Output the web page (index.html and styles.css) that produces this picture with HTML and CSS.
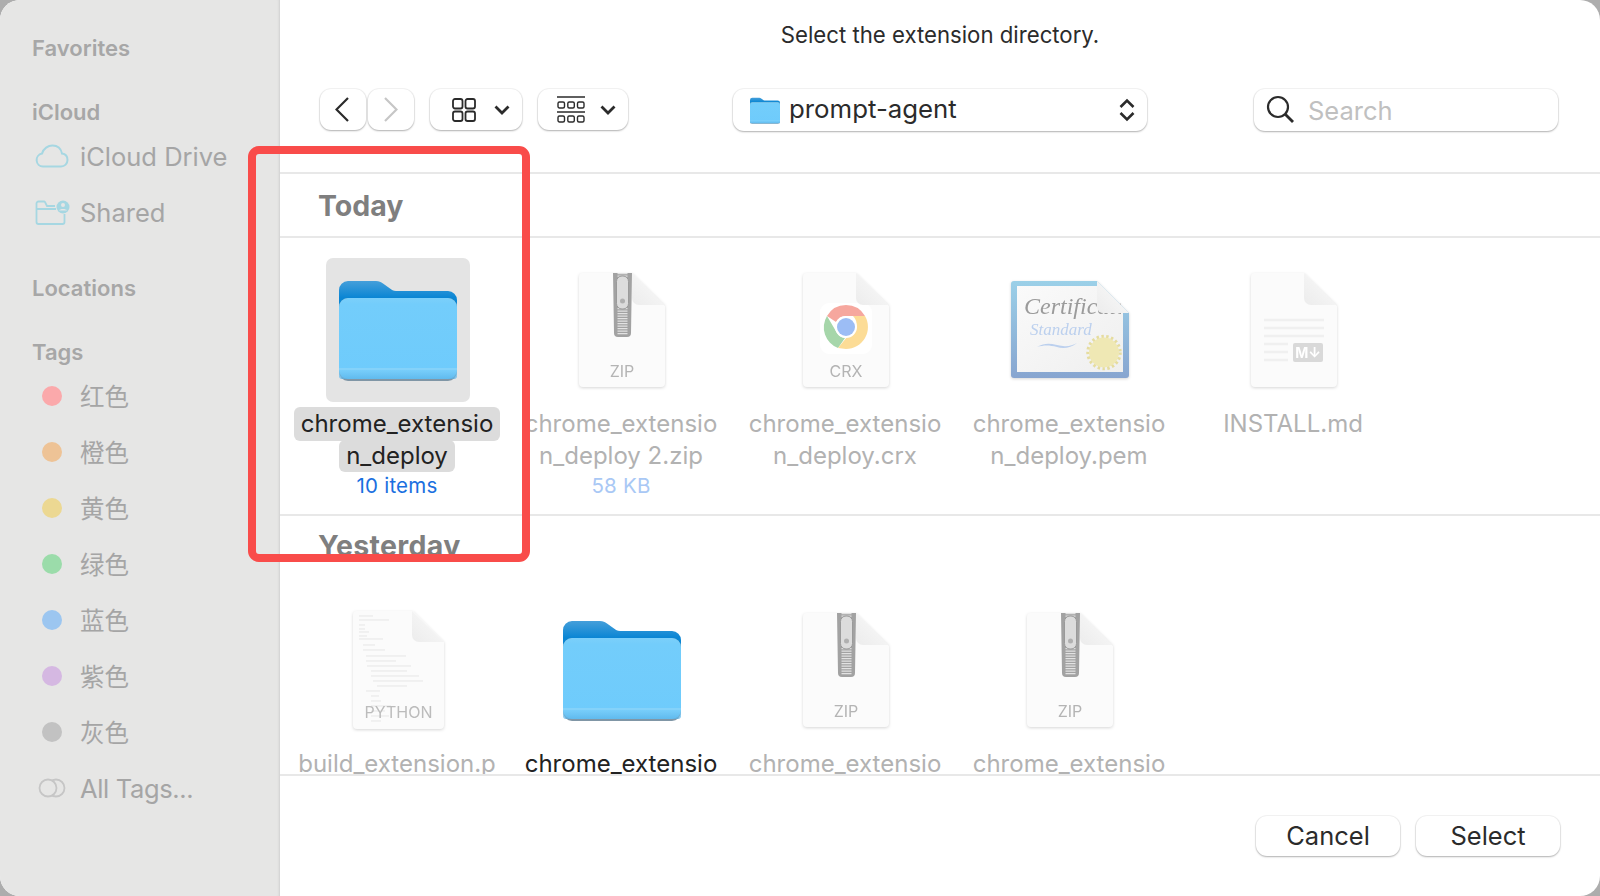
FILE: index.html
```html
<!DOCTYPE html>
<html lang="en">
<head>
<meta charset="utf-8">
<title>Select the extension directory</title>
<link rel="stylesheet" href="styles.css">
</head>
<body>
<svg class="defs" width="0" height="0" aria-hidden="true">
  <defs>
    <linearGradient id="fback" x1="0" y1="0" x2="0" y2="1"><stop offset="0" stop-color="#459fda"/><stop offset=".34" stop-color="#0a86d4"/></linearGradient>
    <linearGradient id="ffront" x1="0" y1="0" x2="0" y2="1"><stop offset="0" stop-color="#7bcffa"/><stop offset=".08" stop-color="#73cdfb"/><stop offset="1" stop-color="#6ecbfc"/></linearGradient>
    <linearGradient id="fbase" x1="0" y1="0" x2="0" y2="1"><stop offset="0" stop-color="#7ccffa"/><stop offset="1" stop-color="#5ab3e8"/></linearGradient>
    <linearGradient id="certb" x1="0" y1="0" x2="0" y2="1"><stop offset="0" stop-color="#9bd0e8"/><stop offset="1" stop-color="#87a5d0"/></linearGradient>
    <linearGradient id="certi" x1="0" y1="0" x2="1" y2="1"><stop offset="0" stop-color="#fafafa"/><stop offset="1" stop-color="#efefef"/></linearGradient>
    <linearGradient id="foldg" x1="0" y1="1" x2="1" y2="0"><stop offset="0" stop-color="#ececec"/><stop offset="1" stop-color="#fbfbfb"/></linearGradient>
    <clipPath id="certclip"><rect x="6" y="5" width="104" height="86"/></clipPath>
    <symbol id="folder" viewBox="0 0 118 104">
      <path d="M0 12a9 9 0 0 1 9-9h28c3 0 5 1 7 2.500l7 5c2 1.500 3 2.500 6 2.500h52a9 9 0 0 1 9 9v30H0z" fill="url(#fback)"/>
      <rect y="20" width="118" height="83" rx="9" fill="#8096a6"/>
      <rect y="20" width="118" height="81" rx="9" fill="url(#ffront)"/>
      <path d="M0 90h118v2H0z" fill="#84d2fa"/>
      <path d="M0 92h118v7a3 3 0 0 1-3 2H3a3 3 0 0 1-3-2z" fill="url(#fbase)" opacity=".7"/>
    </symbol>
    <symbol id="doc" viewBox="0 0 86 114">
      <path d="M4 0h49l33 33v77a4 4 0 0 1-4 4H4a4 4 0 0 1-4-4V4a4 4 0 0 1 4-4z" fill="#fbfbfb"/>
    </symbol>
    <symbol id="fold" viewBox="0 0 86 114">
      <path d="M53 0l33 32H60a7 7 0 0 1-7-7z" fill="url(#foldg)"/>
    </symbol>
    <symbol id="zipper" viewBox="0 0 86 114">
      <path d="M34 0h19l-1 60a4 4 0 0 1-4 4h-9a4 4 0 0 1-4-4z" fill="#a2a2a2"/>
      <path d="M43.500 0v62" stroke="#e2e2e2" stroke-width="10" stroke-dasharray="1.200 1.300" fill="none"/>
      <rect x="37.500" y="3" width="12" height="33" rx="5.500" fill="#dcdcdc" stroke="#9a9a9a"/>
      <circle cx="43.500" cy="28" r="2.500" fill="#b0b0b0"/>
    </symbol>
  </defs>
</svg>

<div class="window">
  <aside class="sidebar">
    <div class="heading">Favorites</div>
    <div class="heading gap">iCloud</div>
    <div class="row">
      <span class="ico"><svg width="34" height="24" viewBox="0 0 34 24"><path d="M8 22.500a6.500 6.500 0 0 1-1-12.900C8.500 4.500 13 1.500 17.500 1.500c5 0 8.500 3.300 9.500 8 3.500.5 5.500 3.200 5.500 6.500 0 3.700-2.800 6.500-6.500 6.500z" fill="none" stroke="#a6d7e2" stroke-width="2"/></svg></span>
      <span class="label">iCloud Drive</span>
    </div>
    <div class="row">
      <span class="ico"><svg width="35" height="25" viewBox="0 0 35 25"><path d="M20 6H12L10 2a1.500 1.500 0 0 0-1-.5H3.500a2 2 0 0 0-2 2V22a2 2 0 0 0 2 2h24a2 2 0 0 0 2-2V14M2 9h19" fill="none" stroke="#a6d7e2" stroke-width="1.800"/><circle cx="28" cy="7" r="6.500" fill="#a6d7e2"/><circle cx="28" cy="5" r="2" fill="#e6e6e5"/><path d="M24 10.500c1-2 7-2 8 0z" fill="#e6e6e5"/></svg></span>
      <span class="label">Shared</span>
    </div>
    <div class="heading gap">Locations</div>
    <div class="heading gap">Tags</div>
    <div class="row"><span class="ico"><i class="dot red"></i></span><span class="label cjk">红色</span></div>
    <div class="row"><span class="ico"><i class="dot orange"></i></span><span class="label cjk">橙色</span></div>
    <div class="row"><span class="ico"><i class="dot yellow"></i></span><span class="label cjk">黄色</span></div>
    <div class="row"><span class="ico"><i class="dot green"></i></span><span class="label cjk">绿色</span></div>
    <div class="row"><span class="ico"><i class="dot blue"></i></span><span class="label cjk">蓝色</span></div>
    <div class="row"><span class="ico"><i class="dot purple"></i></span><span class="label cjk">紫色</span></div>
    <div class="row"><span class="ico"><i class="dot gray"></i></span><span class="label cjk">灰色</span></div>
    <div class="row">
      <span class="ico"><svg width="28" height="20" viewBox="0 0 28 20"><circle cx="18" cy="10" r="8.500" fill="none" stroke="#c6c6c6" stroke-width="1.800"/><circle cx="10" cy="10" r="8.500" fill="#e6e6e5" stroke="#c6c6c6" stroke-width="1.800"/></svg></span>
      <span class="label tight">All Tags...</span>
    </div>
  </aside>

  <main class="main">
    <header class="top">
      <div class="title">Select the extension directory.</div>
      <div class="toolbar">
        <button class="btn nav"><svg class="back-ico" width="14" height="25" viewBox="0 0 14 25"><path d="M13 1L1.500 12.500 13 24" fill="none" stroke="#2b2b2b" stroke-width="2.200"/></svg></button>
        <button class="btn nav fwd"><svg width="14" height="25" viewBox="0 0 14 25"><path d="M1 1l11.500 11.500L1 24" fill="none" stroke="#c6c6c6" stroke-width="2.200"/></svg></button>
        <button class="btn view">
          <svg class="view-ico" width="24" height="24" viewBox="0 0 24 24"><g fill="none" stroke="#2b2b2b" stroke-width="1.800"><rect x="1" y="1" width="9.500" height="9.500" rx="2"/><rect x="13.500" y="1" width="9.500" height="9.500" rx="2"/><rect x="1" y="13.500" width="9.500" height="9.500" rx="2"/><rect x="13.500" y="13.500" width="9.500" height="9.500" rx="2"/></g></svg>
          <svg width="16" height="10" viewBox="0 0 16 10"><path d="M1.500 1.500L8 8l6.500-6.500" fill="none" stroke="#2b2b2b" stroke-width="2.800"/></svg>
        </button>
        <button class="btn gallery">
          <svg class="gallery-ico" width="28" height="28" viewBox="0 0 28 28"><g fill="none" stroke="#2b2b2b"><path d="M0 1h28M0 16h28" stroke-width="1.600"/><g stroke-width="1.400"><rect x="1" y="6" width="6.500" height="6" rx="1.500"/><rect x="10.800" y="6" width="6.500" height="6" rx="1.500"/><rect x="20.500" y="6" width="6.500" height="6" rx="1.500"/><rect x="1" y="20" width="6.500" height="6" rx="1.500"/><rect x="10.800" y="20" width="6.500" height="6" rx="1.500"/><rect x="20.500" y="20" width="6.500" height="6" rx="1.500"/></g></g></svg>
          <svg width="16" height="10" viewBox="0 0 16 10"><path d="M1.500 1.500L8 8l6.500-6.500" fill="none" stroke="#2b2b2b" stroke-width="2.800"/></svg>
        </button>
        <div class="btn path">
          <svg width="30" height="27" viewBox="0 0 118 104" preserveAspectRatio="none"><use href="#folder"/></svg>
          <span class="path-name">prompt-agent</span>
          <svg class="updown" width="16" height="24" viewBox="0 0 16 24"><path d="M1.500 9L8 2.500 14.500 9M1.500 15L8 21.500 14.500 15" fill="none" stroke="#2b2b2b" stroke-width="2.600"/></svg>
        </div>
        <div class="btn search">
          <svg width="30" height="30" viewBox="0 0 30 30"><circle cx="12" cy="12" r="10" fill="none" stroke="#2b2b2b" stroke-width="2.200"/><path d="M19 19l8 8" stroke="#2b2b2b" stroke-width="2.800"/></svg>
          <span class="placeholder">Search</span>
        </div>
      </div>
    </header>

    <section class="scroll">
      <h2 class="day ruled">Today</h2>
      <div class="grid first">
        <div class="item sel">
          <div class="thumb"><svg width="118" height="104"><use href="#folder"/></svg></div>
          <div class="name"><span class="line">chrome_extensio</span><span class="line">n_deploy</span></div>
          <div class="sub">10 items</div>
        </div>
        <div class="item">
          <div class="thumb"><svg class="paper" width="86" height="114" viewBox="0 0 86 114"><use href="#doc"/><use href="#zipper"/><use href="#fold"/><text x="43" y="104" class="kind">ZIP</text></svg></div>
          <div class="name dim"><span class="line">chrome_extensio</span><span class="line">n_deploy 2.zip</span></div>
          <div class="sub soft">58 KB</div>
        </div>
        <div class="item">
          <div class="thumb"><svg class="paper" width="86" height="114" viewBox="0 0 86 114">
            <use href="#doc"/>
            <rect x="17" y="30" width="52" height="51" rx="9" fill="#fff"/>
            <path d="M43 32a22 22 0 0 1 19 11H43a11 11 0 0 0-10 6L24 43a22 22 0 0 1 19-11z" fill="#f6a79e"/>
            <path d="M24 43l10 17a11 11 0 0 0 8 5l-7 10A22 22 0 0 1 24 43z" fill="#a6d6aa"/>
            <path d="M62 43a22 22 0 0 1-19 33l-8-1 9-11a11 11 0 0 0 9-10 11 11 0 0 0-3-11z" fill="#fcdc96"/>
            <circle cx="43" cy="54" r="11" fill="#fff"/><circle cx="43" cy="54" r="9" fill="#9cbdf5"/>
            <use href="#fold"/>
            <text x="43" y="104" class="kind">CRX</text></svg></div>
          <div class="name dim"><span class="line">chrome_extensio</span><span class="line">n_deploy.crx</span></div>
        </div>
        <div class="item">
          <div class="thumb"><svg class="paper" width="118" height="98" viewBox="0 0 118 98">
            <path d="M3 0h83l32 32v62a3 3 0 0 1-3 3H3a3 3 0 0 1-3-3V3a3 3 0 0 1 3-3z" fill="url(#certb)"/>
            <path d="M6 5h82l24 27v59H6z" fill="url(#certi)"/>
            <g clip-path="url(#certclip)">
              <text x="13" y="33" class="cert-a">Certificate</text>
              <text x="19" y="54" class="cert-b">Standard</text>
            </g>
            <path d="M26 66c10-6 18-2 26-1 5 1 10-1 14-3-6 5-14 6-20 4-8-2-13-2-20 0z" fill="#bcd0ee"/>
            <circle cx="93" cy="71.500" r="16" fill="none" stroke="#e5dc9f" stroke-width="3.500" stroke-dasharray="2.400 2.420"/>
            <circle cx="93" cy="71.500" r="15" fill="#efe8b4"/>
            <path d="M86 0l32 32H92a6 6 0 0 1-6-6z" fill="url(#foldg)"/>
          </svg></div>
          <div class="name dim"><span class="line">chrome_extensio</span><span class="line">n_deploy.pem</span></div>
        </div>
        <div class="item">
          <div class="thumb"><svg class="paper" width="86" height="114" viewBox="0 0 86 114">
            <use href="#doc"/>
            <path d="M13 47h60M13 55h60M13 63h60M13 71h24M13 79h24M13 87h24" stroke="#f0f0f0" stroke-width="2.500"/>
            <rect x="42" y="70" width="30" height="19" rx="2" fill="#d9d9d9"/>
            <text x="57" y="84.500" class="badge">M↓</text>
            <use href="#fold"/></svg></div>
          <div class="name dim"><span class="line">INSTALL.md</span></div>
        </div>
      </div>
      <h2 class="day next">Yesterday</h2>
      <div class="grid">
        <div class="item">
          <div class="thumb"><svg class="paper" width="91" height="118" viewBox="0 0 91 118">
            <path d="M4 0h56l31 31v83a4 4 0 0 1-4 4H4a4 4 0 0 1-4-4V4a4 4 0 0 1 4-4z" fill="#fbfbfb"/>
            <g stroke="#dedede" stroke-width=".7"><path d="M6 5h14M6 9h30M6 14h6M6 18h6M6 21h10M6 25h8M6 28h24M10 34h12M10 39h22M13 45h40M13 50h30M14 55h44M18 60h36M18 65h48M20 70h50M24 75h30M13 80h14M18 85h8M18 90h10M18 95h20M18 100h14M18 105h18M18 110h10"/></g>
            <path d="M59 0l32 31H66a7 7 0 0 1-7-7z" fill="url(#foldg)"/>
            <text x="45.500" y="107" class="kind kind-py">PYTHON</text></svg></div>
          <div class="name dim"><span class="line">build_extension.p</span></div>
        </div>
        <div class="item">
          <div class="thumb"><svg width="118" height="104"><use href="#folder"/></svg></div>
          <div class="name"><span class="line">chrome_extensio</span></div>
        </div>
        <div class="item">
          <div class="thumb"><svg class="paper" width="86" height="114" viewBox="0 0 86 114"><use href="#doc"/><use href="#zipper"/><use href="#fold"/><text x="43" y="104" class="kind">ZIP</text></svg></div>
          <div class="name dim"><span class="line">chrome_extensio</span></div>
        </div>
        <div class="item">
          <div class="thumb"><svg class="paper" width="86" height="114" viewBox="0 0 86 114"><use href="#doc"/><use href="#zipper"/><use href="#fold"/><text x="43" y="104" class="kind">ZIP</text></svg></div>
          <div class="name dim"><span class="line">chrome_extensio</span></div>
        </div>
      </div>
    </section>

    <footer class="footer">
      <button class="btn action">Cancel</button>
      <button class="btn action">Select</button>
    </footer>
  </main>
</div>
<div class="callout"></div>
</body>
</html>
```

FILE: styles.css
```css
* { box-sizing: border-box; }
html, body { margin: 0; height: 100%; }
body {
  background: #adadad;
  font-family: Inter, "Liberation Sans", "Noto Sans CJK SC", sans-serif;
  color: #2b2b2b;
  overflow: hidden;
}
.defs { position: absolute; }
.window {
  display: flex;
  width: 1600px;
  height: 896px;
  border-radius: 20px;
  overflow: hidden;
  background: #fff;
}

/* Sidebar */
.sidebar {
  flex: none;
  width: 280px;
  padding: 32px 0 0 32px;
  background: #e6e6e5;
  border-right: 1px solid #d6d6d6;
  box-shadow: inset -2px 0 2px -1px rgba(0,0,0,.04);
}
.heading {
  height: 32px;
  line-height: 32px;
  font-size: 22px;
  font-weight: 600;
  color: #a7a7a7;
}
.heading.gap { margin-top: 32px; }
.row {
  display: flex;
  align-items: center;
  height: 56px;
}
.ico {
  display: flex;
  align-items: center;
  justify-content: center;
  width: 40px;
  margin-right: 8px;
}
.label {
  font-size: 25.500px;
  color: #a5a5a5;
  white-space: nowrap;
}
.label.tight { letter-spacing: -.35px; }
.label.cjk {
  padding-bottom: 2px;
  font-size: 24.500px;
  font-family: "Noto Sans CJK SC", sans-serif;
}
.dot { display: block; width: 20px; height: 20px; border-radius: 50%; }
.red { background: #fba9ab; }
.orange { background: #eec396; }
.yellow { background: #ecd892; }
.green { background: #9bdcaa; }
.blue { background: #9cc6f0; }
.purple { background: #d5b8e2; }
.gray { background: #c2c2c2; }

/* Main column */
.main {
  flex: 1;
  display: flex;
  flex-direction: column;
  min-width: 0;
}
.top { flex: none; height: 172px; }
.title {
  height: 68px;
  padding-top: 1px;
  line-height: 68px;
  text-align: center;
  font-size: 22.200px;
}
.toolbar {
  display: flex;
  align-items: flex-start;
  margin-top: 21px;
  padding-left: 40px;
}
.btn {
  display: flex;
  align-items: center;
  margin: 0;
  padding: 0;
  border: 0;
  background: #fff;
  border-radius: 11px;
  box-shadow: 0 1px 2px rgba(0,0,0,.28), 0 0 0 1px rgba(0,0,0,.045);
  font-family: inherit;
  color: #2b2b2b;
}
.nav { width: 46px; height: 41px; justify-content: center; }
.back-ico { margin-right: 2px; }
.nav.fwd { margin-left: 2px; }
.view { width: 92px; height: 41px; margin-left: 16px; padding-left: 22px; }
.view-ico { margin-right: 18px; }
.gallery { width: 90px; height: 41px; margin-left: 16px; padding-left: 19px; }
.gallery-ico { margin-right: 15px; }
.path {
  width: 414px;
  height: 42px;
  margin-left: 105px;
  padding: 0 12px 0 17px;
}
.path-name { flex: 1; margin-left: 9px; font-size: 25.800px; line-height: 40px; padding-bottom: 2px; }
.search {
  width: 304px;
  height: 42px;
  margin-left: 107px;
  padding-left: 12px;
}
.placeholder { margin-left: 12px; font-size: 25.500px; color: #c0c0c0; }

/* File browser */
.scroll {
  flex: none;
  height: 604px;
  overflow: hidden;
  border-top: 2px solid #e8e8e8;
  border-bottom: 2px solid #e8e8e8;
}
.day {
  height: 62px;
  margin: 0;
  padding: 1px 0 0 38px;
  line-height: 62px;
  font-size: 28.500px;
  font-weight: 700;
  color: #7f7f7f;
}
.day.ruled { height: 64px; border-bottom: 2px solid #e8e8e8; }
.day.next { padding-top: 0; line-height: 60px; letter-spacing: .3px; }
.grid {
  display: grid;
  grid-template-columns: repeat(5, 224px);
  padding: 20px 0 0 5px;
}
.grid.first { height: 278px; border-bottom: 2px solid #e8e8e8; }
.item { display: flex; flex-direction: column; align-items: center; }
.thumb {
  display: flex;
  align-items: center;
  justify-content: center;
  width: 144px;
  height: 144px;
  margin-left: 2px;
  border-radius: 7px;
}
.item.sel .thumb { background: #e4e4e4; }
.paper { filter: drop-shadow(0 1px 1.500px rgba(0,0,0,.16)); overflow: visible; }
.name { margin-top: 6px; font-size: 24px; color: #222; text-align: center; }
.name.dim { color: #b2b2b2; }
.line {
  display: block;
  width: fit-content;
  height: 32px;
  margin: 0 auto;
  padding: 0 7px;
  line-height: 32px;
  white-space: nowrap;
}
.item.sel .line { background: #dcdcdc; border-radius: 6px; }
.item.sel .line:first-child { height: 34px; margin-top: -1px; padding-top: 1px; margin-bottom: -1px; }
.sub {
  margin-top: 2px;
  height: 24px;
  line-height: 24px;
  font-size: 20.500px;
  letter-spacing: .2px;
  color: #1a6fe0;
}
.sub.soft { color: #a9c8f5; }
.kind {
  font: 16px Inter, sans-serif;
  fill: #b4b4b4;
  text-anchor: middle;
}
.kind-py { fill: #bcbcbc; }
.badge {
  font: 700 14px Inter, sans-serif;
  fill: #fff;
  text-anchor: middle;
}
.cert-a { font: italic 24px "Liberation Serif", serif; fill: #9b9b9b; }
.cert-b { font: italic 17px "Liberation Serif", serif; fill: #bcd0ee; }

/* Footer */
.footer {
  flex: 1;
  display: flex;
  justify-content: flex-end;
  gap: 16px;
  padding: 40px 40px 0 0;
}
.action {
  width: 144px;
  height: 40px;
  padding-bottom: 2px;
  justify-content: center;
  font-size: 25.500px;
}

/* Annotation drawn over the screenshot */
.callout {
  position: absolute;
  left: 248px;
  top: 146px;
  width: 282px;
  height: 416px;
  border: 8px solid #f94c4a;
  border-radius: 11px;
}
```
